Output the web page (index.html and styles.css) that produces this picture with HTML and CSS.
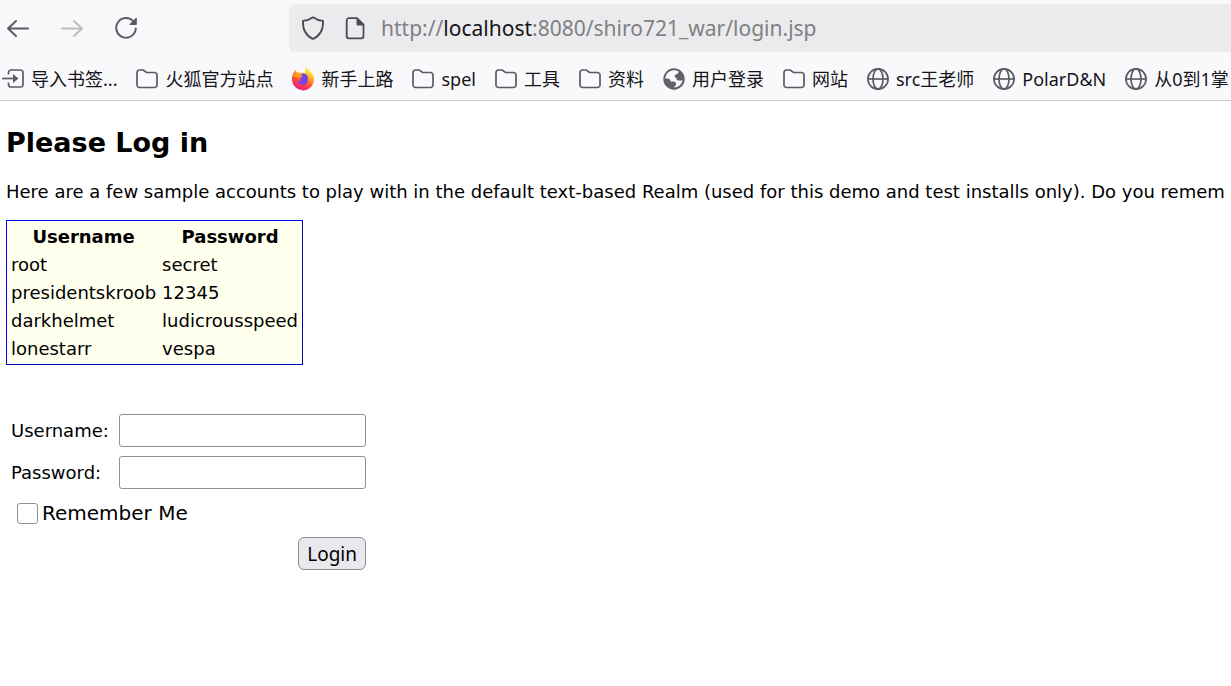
FILE: index.html
```html
<!DOCTYPE html>
<html lang="en">
<head>
    <meta charset="UTF-8">
    <meta name="viewport" content="width=device-width, initial-scale=1.0">
    <title>Please Log in</title>
    <link rel="stylesheet" href="styles.css">
</head>
<body>
    <!-- Shared bookmark icons -->
    <svg class="symbols" aria-hidden="true">
        <symbol id="folder" viewBox="0 0 22 22">
            <path d="M1 17V4.500a2.500 2.500 0 0 1 2.500-2.500h3.800l3.200 2.500h8a2.500 2.500 0 0 1 2.500 2.500v10a2.500 2.500 0 0 1-2.500 2.500H3.500A2.500 2.500 0 0 1 1 17z" fill="none" stroke="#5b5b66" stroke-width="1.700"/>
        </symbol>
        <symbol id="globe" viewBox="0 0 22 22">
            <g fill="none" stroke="#5b5b66" stroke-width="1.700">
                <circle cx="11" cy="11" r="10.100"/>
                <ellipse cx="11" cy="11" rx="5" ry="10.100"/>
                <path d="M1 11h20"/>
            </g>
        </symbol>
    </svg>
    <header class="browser">
        <div class="toolbar">
            <nav class="nav-buttons">
                <button type="button" aria-label="Back">
                    <svg viewBox="0 0 24 24"><path d="M22 12.500H2.500M10 5l-8 7.500 8 7.500" fill="none" stroke="#5b5b66" stroke-width="2" stroke-linecap="round" stroke-linejoin="round"/></svg>
                </button>
                <button type="button" aria-label="Forward" disabled>
                    <svg viewBox="0 0 24 24"><path d="M2 12.500h19.500M14 5l8 7.500-8 7.500" fill="none" stroke="#bdbdc2" stroke-width="2" stroke-linecap="round" stroke-linejoin="round"/></svg>
                </button>
                <button type="button" aria-label="Reload">
                    <svg viewBox="0 0 24 24"><path d="M19.500 5.500A9.800 9.800 0 1 0 21.800 12.500" fill="none" stroke="#5b5b66" stroke-width="2" stroke-linecap="round"/><path d="M22.300 2v6.500h-6.500z" fill="#5b5b66" stroke="#5b5b66" stroke-linejoin="round"/></svg>
                </button>
            </nav>
            <div class="url-bar">
                <div class="url-icons">
                    <svg viewBox="0 0 24 24"><path d="M12 1.200c3 2.200 6 3.200 10 3.600.4 7-2 14.500-10 18.200C4 19.300 1.600 11.800 2 4.800c4-.4 7-1.400 10-3.600z" fill="none" stroke="#4b4b55" stroke-width="1.800" stroke-linejoin="round"/></svg>
                    <svg viewBox="0 0 24 24"><path d="M6 2.200h8l6.500 6.500V20a2.300 2.300 0 0 1-2.300 2.300H6A2.300 2.300 0 0 1 3.700 20V4.500A2.300 2.300 0 0 1 6 2.200z" fill="none" stroke="#4b4b55" stroke-width="1.800"/><path d="M13.500 2l7.500 7.500h-6a1.500 1.500 0 0 1-1.500-1.500z" fill="#4b4b55"/></svg>
                </div>
                <span class="url">http://<b>localhost</b>:8080/shiro721_war/login.jsp</span>
            </div>
        </div>
        <nav class="bookmarks">
            <a href="#"><svg viewBox="0 0 22 22"><g fill="none" stroke="#5b5b66" stroke-width="1.700"><path d="M6.500 6.500V4.500A2.500 2.500 0 0 1 9 2h9.500A2.500 2.500 0 0 1 21 4.500v12a2.500 2.500 0 0 1-2.500 2.500H9a2.500 2.500 0 0 1-2.500-2.500v-2"/><path d="M0 10.500h12"/></g><path d="M11 6l5.500 4.500L11 15z" fill="#5b5b66"/></svg>导入书签...</a>
            <a href="#"><svg><use href="#folder"/></svg>火狐官方站点</a>
            <a href="#"><svg viewBox="0 0 22 22">
                <defs>
                    <linearGradient id="flame" x1="0.8" y1="0" x2="0.3" y2="1">
                        <stop offset="0.1" stop-color="#fff044"/>
                        <stop offset="0.4" stop-color="#ffa425"/>
                        <stop offset="0.65" stop-color="#ff4a3a"/>
                        <stop offset="1" stop-color="#e6188a"/>
                    </linearGradient>
                </defs>
                <path d="M14.500-1c1 2.500 5 4.500 6.500 7.500 1.200 2.300 1.300 5.300.6 7.700A11 11 0 0 1 0 12.200C-.3 8.500.8 5 3.500 1.800L5 4.500c1.500-.3 2.800 0 4 .6 1.800-.6 3.300-.4 4.600.3C12.800 3 13 1 14.500-1z" fill="url(#flame)"/>
                <path d="M9 6.200c3.800-2 7 .8 7 4.600a5.200 5.200 0 0 1-10.300 1.600c1.500.8 3.200.8 4.800-.6-1.700 0-3-.8-3-2 .9-.7 2.200-.5 2.700-1.400C10.300 8 9.200 7.300 9 6.200z" fill="#7542e5"/>
                <path d="M1.500 8c1-2 2.300-3 4-3.200L9 6.200c-.1 1.300.4 2 1.300 2.300-.5 1.200-2.300 1-3.200 1.800C5 9 3 9.200 1.500 8z" fill="#ff9a1f"/>
            </svg>新手上路</a>
            <a href="#"><svg><use href="#folder"/></svg>spel</a>
            <a href="#"><svg><use href="#folder"/></svg>工具</a>
            <a href="#"><svg><use href="#folder"/></svg>资料</a>
            <a href="#"><svg viewBox="0 0 22 22"><circle cx="11" cy="11" r="10.700" fill="#5f6368"/><path d="M11 2.200c2.200 0 3.800.6 5.200 1.700-1 .3-1.500 1-1.500 2.100-1.800 0-3 .7-3 2.200 0 1 .7 1.600 1.700 1.800 0 2 1 2.600 2.800 2.600h3.400c-1 4-4.300 6.900-8.500 7 0-1.500 2-1.500 2-3.600 0-1.600-1-2.600-3-2.600H7.500c0-1.800-1.200-2.800-3.200-2.800H2.300C2.400 6 6 2.300 11 2.200z" fill="#f9f9fb"/></svg>用户登录</a>
            <a href="#"><svg><use href="#folder"/></svg>网站</a>
            <a href="#"><svg><use href="#globe"/></svg>src王老师</a>
            <a href="#"><svg><use href="#globe"/></svg>PolarD&amp;N</a>
            <a href="#"><svg><use href="#globe"/></svg>从0到1掌</a>
        </nav>
    </header>
    <main>
        <h2>Please Log in</h2>
        <p class="intro">Here are a few sample accounts to play with in the default text-based Realm (used for this demo and test installs only). Do you remem</p>
        <table class="sample">
            <thead>
                <tr><th>Username</th><th>Password</th></tr>
            </thead>
            <tbody>
                <tr><td>root</td><td>secret</td></tr>
                <tr><td>presidentskroob</td><td>12345</td></tr>
                <tr><td>darkhelmet</td><td>ludicrousspeed</td></tr>
                <tr><td>lonestarr</td><td>vespa</td></tr>
            </tbody>
        </table>
        <form class="login-form">
            <label for="username">Username:</label>
            <input type="text" id="username" name="username">
            <label for="password">Password:</label>
            <input type="password" id="password" name="password">
            <div class="remember">
                <input type="checkbox" id="rememberMe" name="rememberMe">
                <label for="rememberMe">Remember Me</label>
            </div>
            <button type="submit">Login</button>
        </form>
    </main>
</body>
</html>
```

FILE: styles.css
```css
body {
    margin: 0;
    background: #fff;
    color: #000;
    font-family: Verdana, "DejaVu Sans", sans-serif;
    font-size: 18px;
    overflow-x: hidden;
}
.symbols {
    display: none;
}

/* Browser bars */
.browser {
    background: #f9f9fb;
    border-bottom: 1px solid #ccccd0;
    font-family: "Noto Sans", "Noto Sans CJK SC", sans-serif;
    overflow: hidden;
}
.toolbar {
    display: flex;
    padding-top: 4px;
}
.nav-buttons {
    display: flex;
    flex: none;
    align-items: center;
    gap: 30px;
    width: 283px;
    padding-left: 6px;
}
.nav-buttons button {
    width: 24px;
    height: 24px;
    padding: 0;
    border: none;
    background: none;
}
.nav-buttons svg,
.url-bar svg {
    display: block;
    flex: none;
    width: 24px;
    height: 24px;
}
.url-bar {
    display: flex;
    flex: 1;
    align-items: center;
    gap: 14px;
    height: 48px;
    padding-left: 12px;
    border-radius: 6px 0 0 6px;
    background: #ebebed;
}
.url-icons {
    display: flex;
    gap: 18px;
}
.url {
    color: #808084;
    font-size: 21px;
    white-space: nowrap;
}
.url b {
    color: #15141a;
    font-weight: normal;
}
.bookmarks {
    display: flex;
    align-items: center;
    gap: 19px;
    height: 42px;
    padding-top: 6px;
    padding-left: 2px;
}
.bookmarks a {
    display: flex;
    flex: none;
    align-items: center;
    gap: 7px;
    height: 28px;
    color: #15141a;
    font-size: 18px;
    line-height: 28px;
    text-decoration: none;
    white-space: nowrap;
}
.bookmarks svg {
    flex: none;
    width: 22px;
    height: 22px;
    overflow: visible;
}

/* Page */
main {
    padding: 24px 6px;
}
h2 {
    margin: 0;
    font-size: 27px;
    line-height: 36px;
}
.intro {
    margin: 19px 0 16px;
    line-height: 24px;
    white-space: nowrap;
}
.sample {
    border: 1px solid;
    border-color: #0000ff #0000c0 #0000c0 #0000ff;
    border-spacing: 2px 3px;
    background: #ffffee;
}
.sample th,
.sample td {
    padding: 1px 2px;
    line-height: 23px;
}
.sample td {
    text-align: left;
}
.login-form {
    display: grid;
    grid-template-columns: 99px 247px;
    align-items: center;
    column-gap: 9px;
    row-gap: 9px;
    width: max-content;
    margin-top: 49px;
    padding-left: 5px;
}
.login-form input[type="text"],
.login-form input[type="password"] {
    box-sizing: border-box;
    width: 100%;
    height: 33px;
    border: 1px solid #8f8f9d;
    border-radius: 3px;
    background: #fff;
}
.remember {
    display: flex;
    grid-column: 1 / 3;
    align-items: center;
    gap: 4px;
    height: 30px;
    padding-left: 6px;
    font-size: 20px;
}
.remember input {
    appearance: none;
    box-sizing: border-box;
    width: 21px;
    height: 21px;
    margin: 0;
    border: 1px solid #8f8f9d;
    border-radius: 3px;
    background: #fff;
}
.login-form button {
    grid-column: 2;
    justify-self: end;
    height: 33px;
    padding: 0 8px;
    border: 1px solid #8f8f9d;
    border-radius: 6px;
    background: #e9e9ed;
    color: #000;
    font-family: "Noto Sans", sans-serif;
    font-size: 19px;
    line-height: 30px;
}
```
